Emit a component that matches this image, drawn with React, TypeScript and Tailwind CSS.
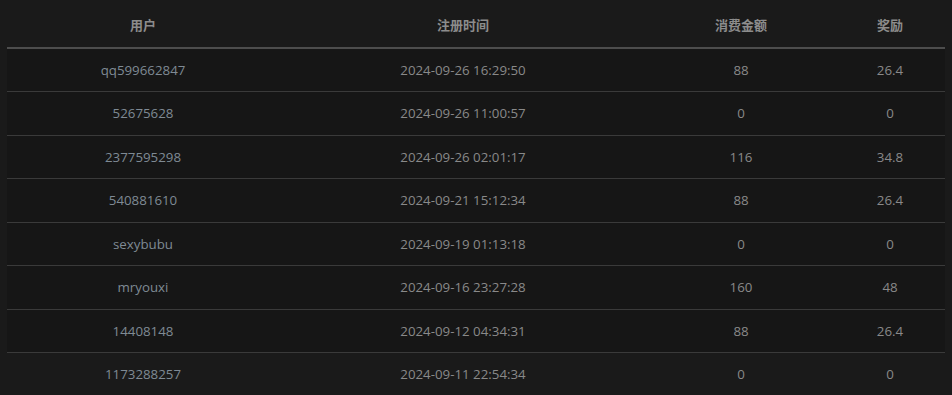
const rows = [
  { user: 'qq599662847', time: '2024-09-26 16:29:50', amount: '88', reward: '26.4' },
  { user: '52675628', time: '2024-09-26 11:00:57', amount: '0', reward: '0' },
  { user: '2377595298', time: '2024-09-26 02:01:17', amount: '116', reward: '34.8' },
  { user: '540881610', time: '2024-09-21 15:12:34', amount: '88', reward: '26.4' },
  { user: 'sexybubu', time: '2024-09-19 01:13:18', amount: '0', reward: '0' },
  { user: 'mryouxi', time: '2024-09-16 23:27:28', amount: '160', reward: '48' },
  { user: '14408148', time: '2024-09-12 04:34:31', amount: '88', reward: '26.4' },
  { user: '1173288257', time: '2024-09-11 22:54:34', amount: '0', reward: '0' },
];

export default function App() {
  return (
    <div
      className="w-[952px] h-[395px] overflow-hidden bg-[#1a1a1a] px-[7px]"
      style={{ fontFamily: '"Open Sans", "Noto Sans CJK SC", sans-serif' }}
    >
      <table className="w-[938px] border-collapse table-fixed text-[13.3px]">
        <colgroup>
          <col className="w-[272px]" />
          <col className="w-[368px]" />
          <col className="w-[188px]" />
          <col className="w-[110px]" />
        </colgroup>
        <thead>
          <tr className="h-[48px] border-b-2 border-[#4d4d4d] text-[13px]">
            <th className="font-bold text-[#8c8c8c] text-center pt-[5px]">用户</th>
            <th className="font-bold text-[#8c8c8c] text-center pt-[5px]">注册时间</th>
            <th className="font-bold text-[#8c8c8c] text-center pt-[5px]">消费金额</th>
            <th className="font-bold text-[#8c8c8c] text-center pt-[5px]">奖励</th>
          </tr>
        </thead>
        <tbody>
          {rows.map((r, i) => (
            <tr
              key={r.user}
              className={`h-[43.5px] border-b border-[#3a3a3a] ${i === rows.length - 1 ? 'bg-[#1a1a1a]' : 'bg-[#161616]'}`}
            >
              <td className="text-center text-[#7f8a94] pt-[2px]">{r.user}</td>
              <td className="text-center text-[#898989] pt-[2px]">{r.time}</td>
              <td className="text-center text-[#898989] pt-[2px]">{r.amount}</td>
              <td className="text-center text-[#898989] pt-[2px]">{r.reward}</td>
            </tr>
          ))}
        </tbody>
      </table>
    </div>
  );
}
